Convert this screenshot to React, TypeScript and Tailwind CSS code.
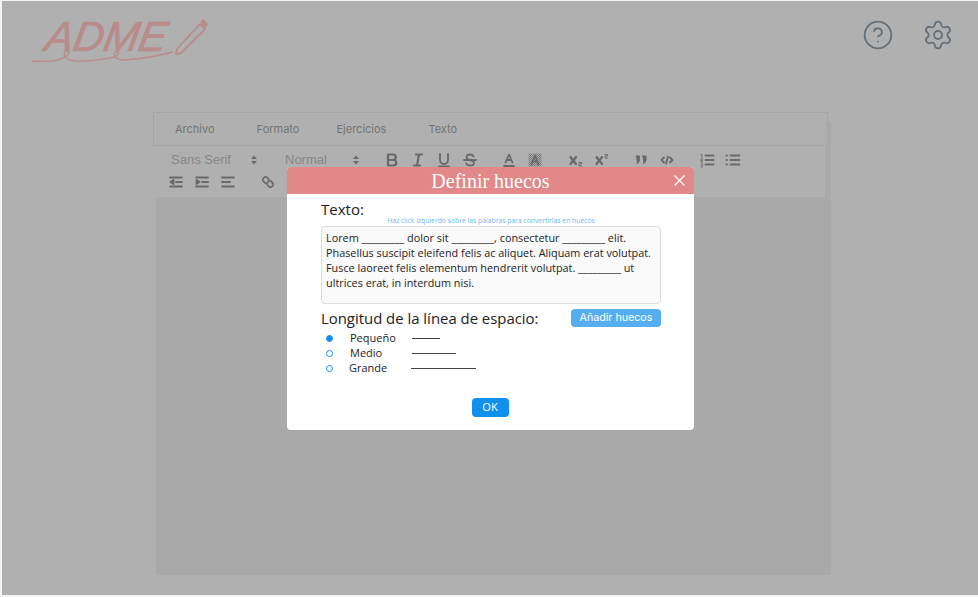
import { CircleHelp, Settings, X } from 'lucide-react'
import type { ReactNode } from 'react'

const open = 'font-["Open_Sans","Noto_Sans",sans-serif]'

function Tool({ children, bold }: { children: ReactNode; bold?: boolean }) {
  return (
    <div className="flex h-[22px] w-[26px] items-center justify-center">
      <svg
        viewBox="0 0 18 18"
        className="h-[18px] w-[18px] fill-none stroke-[#6a6a6a]"
        strokeWidth={bold ? 2.2 : 1.8}
        strokeLinecap="round"
        strokeLinejoin="round"
      >
        {children}
      </svg>
    </div>
  )
}

function Picker({ label, width }: { label: string; width: string }) {
  return (
    <div className={`flex h-[22px] items-center justify-between pl-2 pr-[5px] ${width}`}>
      <span className='font-["Liberation_Sans",sans-serif] text-[13px] text-[#868686]'>{label}</span>
      <svg viewBox="0 0 8 10" className="h-[10px] w-[8px] fill-[#6a6a6a]">
        <path d="M4 0.5 7 4H1zM4 9.5 1 6h6z" />
      </svg>
    </div>
  )
}

function Radio({ label, checked, labelClass, lineClass }: { label: string; checked?: boolean; labelClass: string; lineClass: string }) {
  return (
    <div className="flex h-[15px] items-center">
      <div className="flex w-[16px] justify-center">
        <div className={`h-[7px] w-[7px] rounded-full border border-[#1d90e8] ${checked ? 'bg-[#0f8cec]' : 'bg-white'}`} />
      </div>
      <span className={`text-[11px] text-[#222] ${labelClass}`}>{label}</span>
      <div className={`h-px bg-[#444] ${lineClass}`} />
    </div>
  )
}

export default function App() {
  return (
    <div className="relative h-[597px] w-[978px] overflow-hidden bg-[#f4f4f4] pb-[2px] pl-[2px] pt-px">
      <div className="flex h-full flex-col bg-[#b0b0b0]">
        {/* Header */}
        <div className="flex h-[72px] shrink-0 items-start justify-between border-b border-[#aeaeae]">
          <div className="relative ml-[41px] mt-[15px] h-[50px] w-[170px]">
            <span className='-mt-[2px] ml-[3px] block -skew-x-[10deg] font-["Liberation_Sans",sans-serif] text-[42px] italic leading-[46px] text-[#b98b8b] [-webkit-text-stroke:0.7px_#b98b8b]'>ADME</span>
            <svg viewBox="0 0 170 50" className="absolute left-0 top-0 h-[50px] w-[170px] overflow-visible fill-none stroke-[#b98b8b]">
              <path
                d="M-11 45 C3 46 15 45 20 42 C27 38 28 34 24 35 C19 36 20 44 32 45 C50 46 66 42 72 41 C76 38 77 35 73 36 C69 37 71 44 82 44 C100 43 118 39 130 36"
                strokeWidth="1.3"
              />
              <path d="M134 33 L157 8 L162 13 L138 37 L133 38 Z" strokeWidth="1.8" strokeLinejoin="round" />
              <path d="M158 6 L160 4 L164 8 L162 11 Z" fill="#b98b8b" strokeWidth="1.5" strokeLinejoin="round" />
            </svg>
          </div>
          <div className="mr-[24px] mt-[18px] flex gap-[28px] text-[#66707a]">
            <CircleHelp size={32} strokeWidth={1.4} />
            <Settings size={32} strokeWidth={1.4} />
          </div>
        </div>

        {/* Editor */}
        <div className="ml-[151px] mt-[39px] flex w-[678px] flex-col">
          <div className='relative z-10 -mb-[24px] flex h-[34px] w-[675px] items-center border border-[#a5a5a5] bg-[#b0b0b0] pl-[21px] font-["Inter",sans-serif] text-[11px] text-[#747474]'>
            <span>Archivo</span>
            <span className="ml-[42px]">Formato</span>
            <span className="ml-[37px]">Ejercicios</span>
            <span className="ml-[42px]">Texto</span>
          </div>
          <div className="ml-[3px] h-[453px] w-[675px] bg-[#a9a9a9] pt-[24px]">
            <div className="flex h-[51px] w-[669px] flex-col bg-[#b0b0b0] pt-[3px]">
              <div className="flex pl-[7px]">
                <Picker label="Sans Serif" width="w-[100px]" />
                <Picker label="Normal" width="ml-[14px] w-[88px]" />
                <div className="ml-[14px] flex">
                  <Tool bold><path d="M5 3.500h5a2.600 2.600 0 0 1 0 5.500H5zM5 9h6a2.800 2.800 0 0 1 0 5.500H5z" /></Tool>
                  <Tool bold><path d="M7 3.500h6M5 14.500h6M10 3.500 8 14.500" /></Tool>
                  <Tool><path d="M5 3v6a4 4 0 0 0 8 0V3M4 15.500h10" /></Tool>
                  <Tool><path d="M3 9h12M12.500 5.500C12 4 10.500 3.500 9 3.500 7 3.500 5.500 4.500 5.500 6c0 1.500 1 2.300 3.500 3 3 .7 4 1.500 4 3 0 1.600-1.800 2.500-4 2.500-1.700 0-3.300-.7-4-2" /></Tool>
                </div>
                <div className="ml-[13px] flex">
                  <Tool><path d="M5.500 11.500 9 3.500l3.500 8M6.500 9h5M4 15h10" /></Tool>
                  <Tool>
                    <defs>
                      <pattern id="dither" width="2" height="2" patternUnits="userSpaceOnUse">
                        <rect width="1" height="1" fill="#777" stroke="none" />
                        <rect x="1" y="1" width="1" height="1" fill="#777" stroke="none" />
                      </pattern>
                    </defs>
                    <rect x="2.500" y="2.500" width="13" height="13" fill="url(#dither)" stroke="none" />
                    <path d="M5.500 13.500 9 4.500l3.500 9M6.500 10.500h5" />
                  </Tool>
                </div>
                <div className="ml-[15px] flex">
                  <Tool bold><path d="M3.500 6 9 13M9 6l-5.500 7" /><path d="M12 11.500h2.500V13H12v2h2.500" strokeWidth="1" /></Tool>
                  <Tool bold><path d="M3.500 6 9 13M9 6l-5.500 7" /><path d="M12 3.500h2.500V5H12v2h2.500" strokeWidth="1" /></Tool>
                </div>
                <div className="ml-[13px] flex">
                  <Tool bold>
                    <path d="M4 5h3.500v3.500c0 2-1 3.500-2.500 4M10.500 5H14v3.500c0 2-1 3.500-2.500 4" fill="#6a6a6a" strokeWidth="1" />
                  </Tool>
                  <Tool><path d="M6 6.500 3.500 9 6 11.500M12 6.500 14.500 9 12 11.500M10 5.500 8 12.500" /></Tool>
                </div>
                <div className="ml-[14px] flex">
                  <Tool>
                    <path d="M7.500 4.500h8M7.500 9h8M7.500 13.500h8" />
                    <path d="M3 3.500h1v3M2.800 8h1.500v1.500H3V11h1.500M2.800 13h1.500v3H2.800" strokeWidth="0.9" />
                  </Tool>
                  <Tool>
                    <path d="M6.500 4.500h9M6.500 9h9M6.500 13.500h9M2.500 4.500h.5M2.500 9h.5M2.500 13.500h.5" />
                  </Tool>
                </div>
              </div>
              <div className="flex pl-[7px]">
                <Tool><path d="M3 4.500h12M9 9h6M3 13.500h12M6.500 7 3.500 9l3 2z" fill="#6a6a6a" /></Tool>
                <Tool><path d="M3 4.500h12M9 9h6M3 13.500h12M3.500 7l3 2-3 2z" fill="#6a6a6a" /></Tool>
                <Tool><path d="M3 4.500h12M3 9h8M3 13.500h12" /></Tool>
                <div className="ml-[14px]">
                  <Tool bold>
                    <g transform="translate(2 2) scale(.78) rotate(90 9 9)">
                      <path d="M7.500 5.500 10 3a2.600 2.600 0 0 1 3.800 0l1 1a2.600 2.600 0 0 1 0 3.800L12.500 10" />
                      <path d="M10.500 12.500 8 15a2.600 2.600 0 0 1-3.800 0l-1-1a2.600 2.600 0 0 1 0-3.800L5.500 8" />
                      <path d="M7 7l4 4" />
                    </g>
                  </Tool>
                </div>
              </div>
            </div>
          </div>
        </div>
      </div>

      {/* Modal */}
      <div className="absolute inset-0 pl-[287px] pt-[167px]">
        <div className={`flex h-[263px] w-[407px] flex-col overflow-hidden rounded-[4px] bg-white ${open}`}>
          <div className="relative flex h-[27px] shrink-0 items-center justify-center bg-[#e28888]">
            <span className='pt-px font-["Liberation_Serif",serif] text-[20px] text-white'>Definir huecos</span>
            <X size={19} strokeWidth={1.400} className="absolute right-[5px] top-[4px] text-white" />
          </div>
          <div className="flex flex-col pl-[34px] pr-[33px] pt-[5px]">
            <div className="text-[15px] leading-[20px] text-[#222]">Texto:</div>
            <div className="-mt-[2px] text-center text-[6.800px] leading-[7px] text-[#6db8f0]">
              Haz click izquierdo sobre las palabras para convertirlas en huecos
            </div>
            <div className="mt-[2px] h-[78px] w-[340px] rounded-[4px] border border-[#dcdcdc] bg-[#fafafa] px-[4px] py-[3px] text-[10.850px] leading-[15px] text-[#222]">
              Lorem _________ dolor sit _________, consectetur _________ elit. Phasellus suscipit eleifend felis ac aliquet. Aliquam erat volutpat. Fusce laoreet felis elementum hendrerit volutpat. _________ ut ultrices erat, in interdum nisi.
            </div>
            <div className="mt-[5px] flex h-[18px] items-center justify-between">
              <span className="text-[14.900px] text-[#222]">Longitud de la línea de espacio:</span>
              <button className='flex h-[18px] w-[90px] items-center justify-center rounded-[4px] bg-[#55aeef] font-["Inter",sans-serif] text-[10.700px] text-white'>
                Añadir huecos
              </button>
            </div>
            <div className="mt-[4px] flex flex-col">
              <Radio label="Pequeño" checked labelClass="ml-[13px] w-[62px]" lineClass="w-[28px]" />
              <Radio label="Medio" labelClass="ml-[13px] w-[62px]" lineClass="w-[44px]" />
              <Radio label="Grande" labelClass="ml-[12px] w-[62px]" lineClass="w-[65px]" />
            </div>
            <div className="mt-[22px] flex justify-center pr-[2px]">
              <button className="flex h-[19px] w-[37px] items-center justify-center rounded-[4px] bg-[#1290ee] text-[11px] text-white">
                OK
              </button>
            </div>
          </div>
        </div>
      </div>
    </div>
  )
}
